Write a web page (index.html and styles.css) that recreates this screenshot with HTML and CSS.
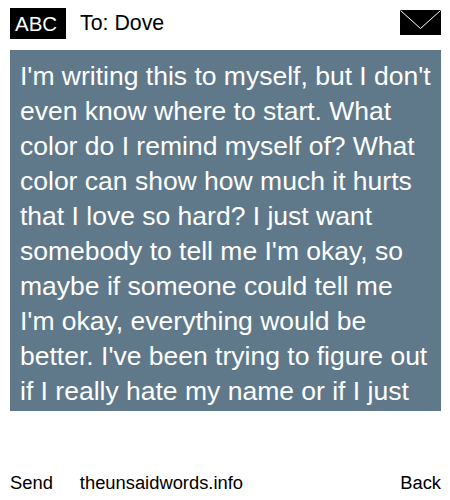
FILE: index.html
```html
<!DOCTYPE html>
<html lang="en">
<head>
  <meta charset="UTF-8" />
  <title>To: Dove</title>
  <link rel="stylesheet" href="styles.css">
</head>
<body>
  <div class="page">
    <div class="header">
      <div class="abc">ABC</div>
      <div class="to">To: Dove</div>
      <svg class="envelope" width="41" height="25" viewBox="0 0 41 25">
        <rect width="41" height="25" fill="#000"/>
        <path d="M0.5 0.5 L20.5 18.5 L40.5 0.5" fill="none" stroke="#fff" stroke-width="1"/>
      </svg>
    </div>
    <div class="message">I'm writing this to myself, but I don't even know where to start. What color do I remind myself of? What color can show how much it hurts that I love so hard? I just want somebody to tell me I'm okay, so maybe if someone could tell me I'm okay, everything would be better. I've been trying to figure out if I really hate my name or if I just</div>
    <div class="footer">
      <span class="send">Send</span>
      <span class="site">theunsaidwords.info</span>
      <span class="back">Back</span>
    </div>
  </div>
</body>
</html>
```
FILE: styles.css
```css
html, body {
  margin: 0;
  padding: 0;
  height: 100%;
  overflow: hidden;
}

body {
  font-family: 'Liberation Sans', Arial, sans-serif;
  background: #ffffff;
  color: #000;
}

.page {
  width: 431px;
  height: 500px;
  margin-left: 10px;
  display: flex;
  flex-direction: column;
}

.header {
  height: 50px;
  display: flex;
  align-items: flex-start;
}

.abc {
  width: 56px;
  height: 31px;
  box-sizing: border-box;
  padding-left: 5px;
  margin-top: 8px;
  background: #000;
  color: #fff;
  font-size: 20.5px;
  line-height: 31px;
}

.to {
  margin-left: 14px;
  margin-top: 8px;
  font-size: 21.33px;
  line-height: 30px;
  flex: 1;
}

.envelope {
  margin-top: 10px;
  display: block;
}

.message {
  height: 361px;
  box-sizing: border-box;
  padding: 9px 10px 0;
  background: #5f798b;
  color: #fff;
  font-size: 26.5px;
  line-height: 35px;
  overflow: hidden;
}

.footer {
  margin-top: 60px;
  display: flex;
  font-size: 18.35px;
  line-height: 24px;
}

.site {
  margin-left: 27px;
  flex: 1;
}
```
